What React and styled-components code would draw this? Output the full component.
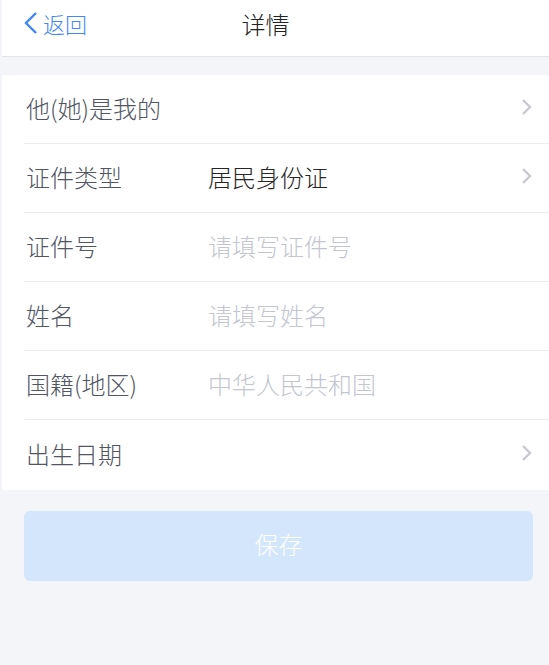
import styled, { createGlobalStyle } from 'styled-components';

const GlobalStyle = createGlobalStyle`
  html, body {
    margin: 0;
    padding: 0;
    background: #f4f5f8;
    font-family: "Noto Sans CJK SC", "Noto Sans", sans-serif;
  }
  * {
    box-sizing: border-box;
  }
`;

const StyledPage = styled.div`
  min-height: 665px;
  background: #f4f5f8;
  padding-left: 2px;
`;

const StyledHeader = styled.header`
  height: 57px;
  background: #fff;
  border-bottom: 1px solid #e3e4e8;
  display: flex;
  align-items: center;
  justify-content: space-between;
  padding: 0 22px 10px 22px;
`;

const StyledBack = styled.div`
  display: flex;
  align-items: center;
  gap: 5px;
  width: 120px;
  color: #3f87f5;
  font-size: 22px;
  font-weight: 300;
`;

const StyledTitle = styled.div`
  font-size: 24px;
  font-weight: 300;
  color: #222;
`;

const StyledList = styled.ul`
  list-style: none;
  margin: 18px 0 0 0;
  padding: 0 0 0 22px;
  background: #fff;
`;

const StyledRow = styled.li`
  height: 69px;
  display: flex;
  align-items: center;
  padding: 0 16px 4px 0;
  border-bottom: 1px solid #ececf0;

  &:last-child {
    border-bottom: 0;
    height: 70px;
  }
`;

const StyledLabel = styled.div`
  width: 184px;
  padding-left: 2px;
  font-size: 24px;
  font-weight: 300;
  color: #515564;
`;

const StyledValue = styled.div`
  flex: 1;
  font-size: 24px;
  font-weight: 300;
  color: ${(p) => (p.$placeholder ? '#c3c6ce' : '#262626')};
`;

const StyledButton = styled.button`
  display: block;
  margin: 21px 16px 0 22px;
  width: calc(100% - 38px);
  height: 70px;
  padding-bottom: 6px;
  border: 0;
  border-radius: 6px;
  background: #d3e6fb;
  color: #fff;
  font-family: inherit;
  font-size: 24px;
  font-weight: 300;
`;

const Chevron = () => (
  <svg width="12" height="18" viewBox="0 0 12 18">
    <path d="M2 2 L9 9 L2 16" fill="none" stroke="#c8cad0" strokeWidth="2.4" />
  </svg>
);

const BackArrow = () => (
  <svg width="14" height="24" viewBox="0 0 14 24">
    <path d="M12 2 L2 12 L12 22" fill="none" stroke="#3f87f5" strokeWidth="2.4" />
  </svg>
);

const rows = [
  { label: '他(她)是我的', value: '', arrow: true },
  { label: '证件类型', value: '居民身份证', arrow: true },
  { label: '证件号', value: '请填写证件号', placeholder: true },
  { label: '姓名', value: '请填写姓名', placeholder: true },
  { label: '国籍(地区)', value: '中华人民共和国', placeholder: true },
  { label: '出生日期', value: '', arrow: true },
];

const App = function () {
  return (
    <StyledPage>
      <GlobalStyle />
      <StyledHeader>
        <StyledBack>
          <BackArrow />
          返回
        </StyledBack>
        <StyledTitle>详情</StyledTitle>
        <div style={{ width: 140 }} />
      </StyledHeader>

      <StyledList>
        {rows.map((row) => (
          <StyledRow key={row.label}>
            <StyledLabel>{row.label}</StyledLabel>
            <StyledValue $placeholder={row.placeholder}>{row.value}</StyledValue>
            {row.arrow && <Chevron />}
          </StyledRow>
        ))}
      </StyledList>

      <StyledButton>保存</StyledButton>
    </StyledPage>
  );
};

export default App;
